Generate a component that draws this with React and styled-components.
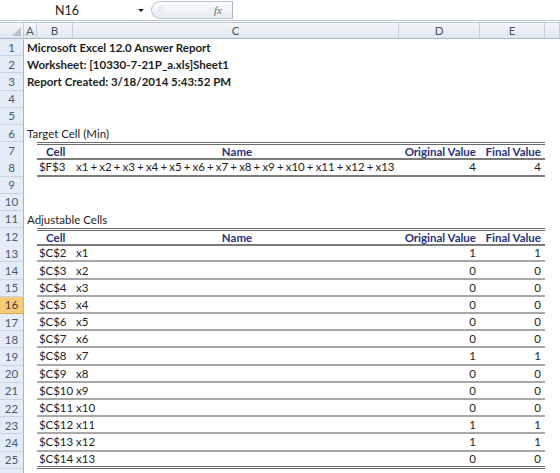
import React from "react";
import styled, { createGlobalStyle, css } from "styled-components";

const Global = createGlobalStyle`
  html, body { margin: 0; padding: 0; background: #fff; }
  body { font-family: Lato, "Open Sans", sans-serif; width: 560px; height: 473px; overflow: hidden; }
`;

const COLS = "24px 13px 36px 326px 81px 65px 1fr";
const ROW_H = 17.2;

const Page = styled.div`
  width: 560px;
  height: 473px;
  overflow: hidden;
  display: flex;
  flex-direction: column;
`;

const FormulaBar = styled.div`
  flex-shrink: 0;
  height: 20px;
  display: flex;
  align-items: center;
  border-bottom: 3px double #b9c6d6;
  background: #fff;
`;

const NameBox = styled.div`
  width: 134px;
  text-align: center;
  font-size: 12.5px;
  color: #222;
  font-family: Lato, sans-serif;
`;

const DropArrow = styled.div`
  width: 0;
  height: 0;
  border-left: 3px solid transparent;
  border-right: 3px solid transparent;
  border-top: 3px solid #222;
  margin-left: 4px;
  margin-right: 7px;
`;

const Capsule = styled.div`
  width: 82px;
  height: 18px;
  box-sizing: border-box;
  border: 1px solid #b8c4d3;
  border-right: 1px solid #a8b4c4;
  border-radius: 9px 0 0 9px;
  background: linear-gradient(#fbfcfd, #e6ebf2);
  display: flex;
  align-items: center;
  justify-content: flex-end;
  padding-right: 10px;
  position: relative;
`;

const Knob = styled.span`
  position: absolute;
  left: 6px;
  top: 4px;
  width: 5px;
  height: 5px;
  border-radius: 50%;
  background: radial-gradient(#fff, #c3ccd8);
`;

const Fx = styled.span`
  font-family: "Liberation Serif", serif;
  font-style: italic;
  font-size: 11px;
  color: #6a6a6a;
`;

const Sheet = styled.div`
  flex-shrink: 0;
  display: flex;
  flex-direction: column;
`;

const Row = styled.div`
  flex-shrink: 0;
  display: grid;
  grid-template-columns: ${COLS};
  height: ${(p) => (p.$head ? 16 : ROW_H)}px;
  font-size: 11.5px;
  color: #1e1e1e;
`;

const ColHead = styled.div`
  background: linear-gradient(#f3f6fa, #dfe6ef);
  border-right: 1px solid #c5cfdb;
  border-bottom: 1px solid #a9b8ca;
  color: #4a5566;
  font-size: 11.5px;
  display: flex;
  align-items: center;
  justify-content: center;
  line-height: 1;
  position: relative;
`;

const Corner = styled.span`
  position: absolute;
  right: 2px;
  bottom: 2px;
  width: 0;
  height: 0;
  border-left: 9px solid transparent;
  border-bottom: 9px solid #b7c1cd;
`;

const RowHead = styled.div`
  background: ${(p) => (p.$active ? "#f8cc76" : "#e4ecf7")};
  border-right: 1px solid #9eb6ce;
  border-bottom: 1px solid ${(p) => (p.$active ? "#e0a84a" : "#c8d4e2")};
  color: ${(p) => (p.$active ? "#3a3a3a" : "#4a5a6e")};
  display: flex;
  align-items: center;
  justify-content: center;
  font-size: 11.5px;
  box-sizing: border-box;
`;

const Cell = styled.div`
  display: flex;
  align-items: center;
  white-space: nowrap;
  overflow: visible;
  box-sizing: border-box;
  font-weight: ${(p) => (p.$bold ? 700 : 400)};
  color: ${(p) => (p.$blue ? "#24337a" : "#1e1e1e")};
  justify-content: ${(p) => (p.$align === "right" ? "flex-end" : p.$align === "center" ? "center" : "flex-start")};
  padding: 0 ${(p) => (p.$align === "right" ? "4px" : "0")} 0 ${(p) => p.$pl ?? 2}px;
  ${(p) => p.$tight && css`word-spacing: -0.7px; letter-spacing: -0.05px;`}
  ${(p) => p.$span && css`grid-column: span ${p.$span};`}
  ${(p) =>
    p.$top &&
    css`
      border-top: 3px double #6b6b6b;
    `}
  ${(p) =>
    p.$bottom === "double" &&
    css`
      border-bottom: 3px double #6b6b6b;
    `}
  ${(p) =>
    p.$bottom === "thin" &&
    css`
      border-bottom: 2px solid #a8a8a8;
    `}
  ${(p) =>
    p.$bottom === "mid" &&
    css`
      border-bottom: 2px solid #7a7a7a;
    `}
`;

const Blank = styled.div``;

const adjustable = [
  ["$C$2", "x1", 1, 1],
  ["$C$3", "x2", 0, 0],
  ["$C$4", "x3", 0, 0],
  ["$C$5", "x4", 0, 0],
  ["$C$6", "x5", 0, 0],
  ["$C$7", "x6", 0, 0],
  ["$C$8", "x7", 1, 1],
  ["$C$9", "x8", 0, 0],
  ["$C$10", "x9", 0, 0],
  ["$C$11", "x10", 0, 0],
  ["$C$12", "x11", 1, 1],
  ["$C$13", "x12", 1, 1],
  ["$C$14", "x13", 0, 0],
];

function TextRow({ n, text, bold }) {
  return (
    <Row>
      <RowHead>{n}</RowHead>
      <Cell $pl={3} $bold={bold} $span={5}>{text}</Cell>
      <Blank />
    </Row>
  );
}

function EmptyRow({ n, active }) {
  return (
    <Row>
      <RowHead $active={active}>{n}</RowHead>
      <Blank />
      <Blank />
      <Blank />
      <Blank />
      <Blank />
      <Blank />
    </Row>
  );
}

function HeaderRow({ n }) {
  return (
    <Row>
      <RowHead>{n}</RowHead>
      <Blank />
      <Cell $top $bottom="mid" $bold $blue $pl={9}>Cell</Cell>
      <Cell $top $bottom="mid" $bold $blue $align="center">Name</Cell>
      <Cell $top $bottom="mid" $bold $blue $align="right">Original Value</Cell>
      <Cell $top $bottom="mid" $bold $blue $align="right">Final Value</Cell>
      <Blank />
    </Row>
  );
}

function DataRow({ n, cell, name, orig, fin, bottom, active, tight }) {
  return (
    <Row>
      <RowHead $active={active}>{n}</RowHead>
      <Blank />
      <Cell $bottom={bottom} $pl={2} $tight>{cell}</Cell>
      <Cell $bottom={bottom} $pl={3} $tight={tight}>{name}</Cell>
      <Cell $bottom={bottom} $align="right">{orig}</Cell>
      <Cell $bottom={bottom} $align="right">{fin}</Cell>
      <Blank />
    </Row>
  );
}

export default function App() {
  return (
    <Page>
      <Global />
      <FormulaBar>
        <NameBox>N16</NameBox>
        <DropArrow />
        <Capsule>
          <Knob />
          <Fx>fx</Fx>
        </Capsule>
      </FormulaBar>
      <Sheet>
        <Row $head>
          <ColHead><Corner /></ColHead>
          <ColHead>A</ColHead>
          <ColHead>B</ColHead>
          <ColHead>C</ColHead>
          <ColHead>D</ColHead>
          <ColHead>E</ColHead>
          <ColHead />
        </Row>
        <TextRow n={1} bold text="Microsoft Excel 12.0 Answer Report" />
        <TextRow n={2} bold text="Worksheet: [10330-7-21P_a.xls]Sheet1" />
        <TextRow n={3} bold text="Report Created: 3/18/2014 5:43:52 PM" />
        <EmptyRow n={4} />
        <EmptyRow n={5} />
        <TextRow n={6} text="Target Cell (Min)" />
        <HeaderRow n={7} />
        <DataRow
          n={8}
          cell="$F$3"
          name="x1 + x2 + x3 + x4 + x5 + x6 + x7 + x8 + x9 + x10 + x11 + x12 + x13"
          orig={4}
          fin={4}
          bottom="mid"
          tight
        />
        <EmptyRow n={9} />
        <EmptyRow n={10} />
        <TextRow n={11} text="Adjustable Cells" />
        <HeaderRow n={12} />
        {adjustable.map(([c, nm, o, f], i) => (
          <DataRow
            key={c}
            n={13 + i}
            cell={c}
            name={nm}
            orig={o}
            fin={f}
            active={13 + i === 16}
            bottom={i === adjustable.length - 1 ? "double" : "thin"}
          />
        ))}
        <EmptyRow n="" />
      </Sheet>
    </Page>
  );
}
